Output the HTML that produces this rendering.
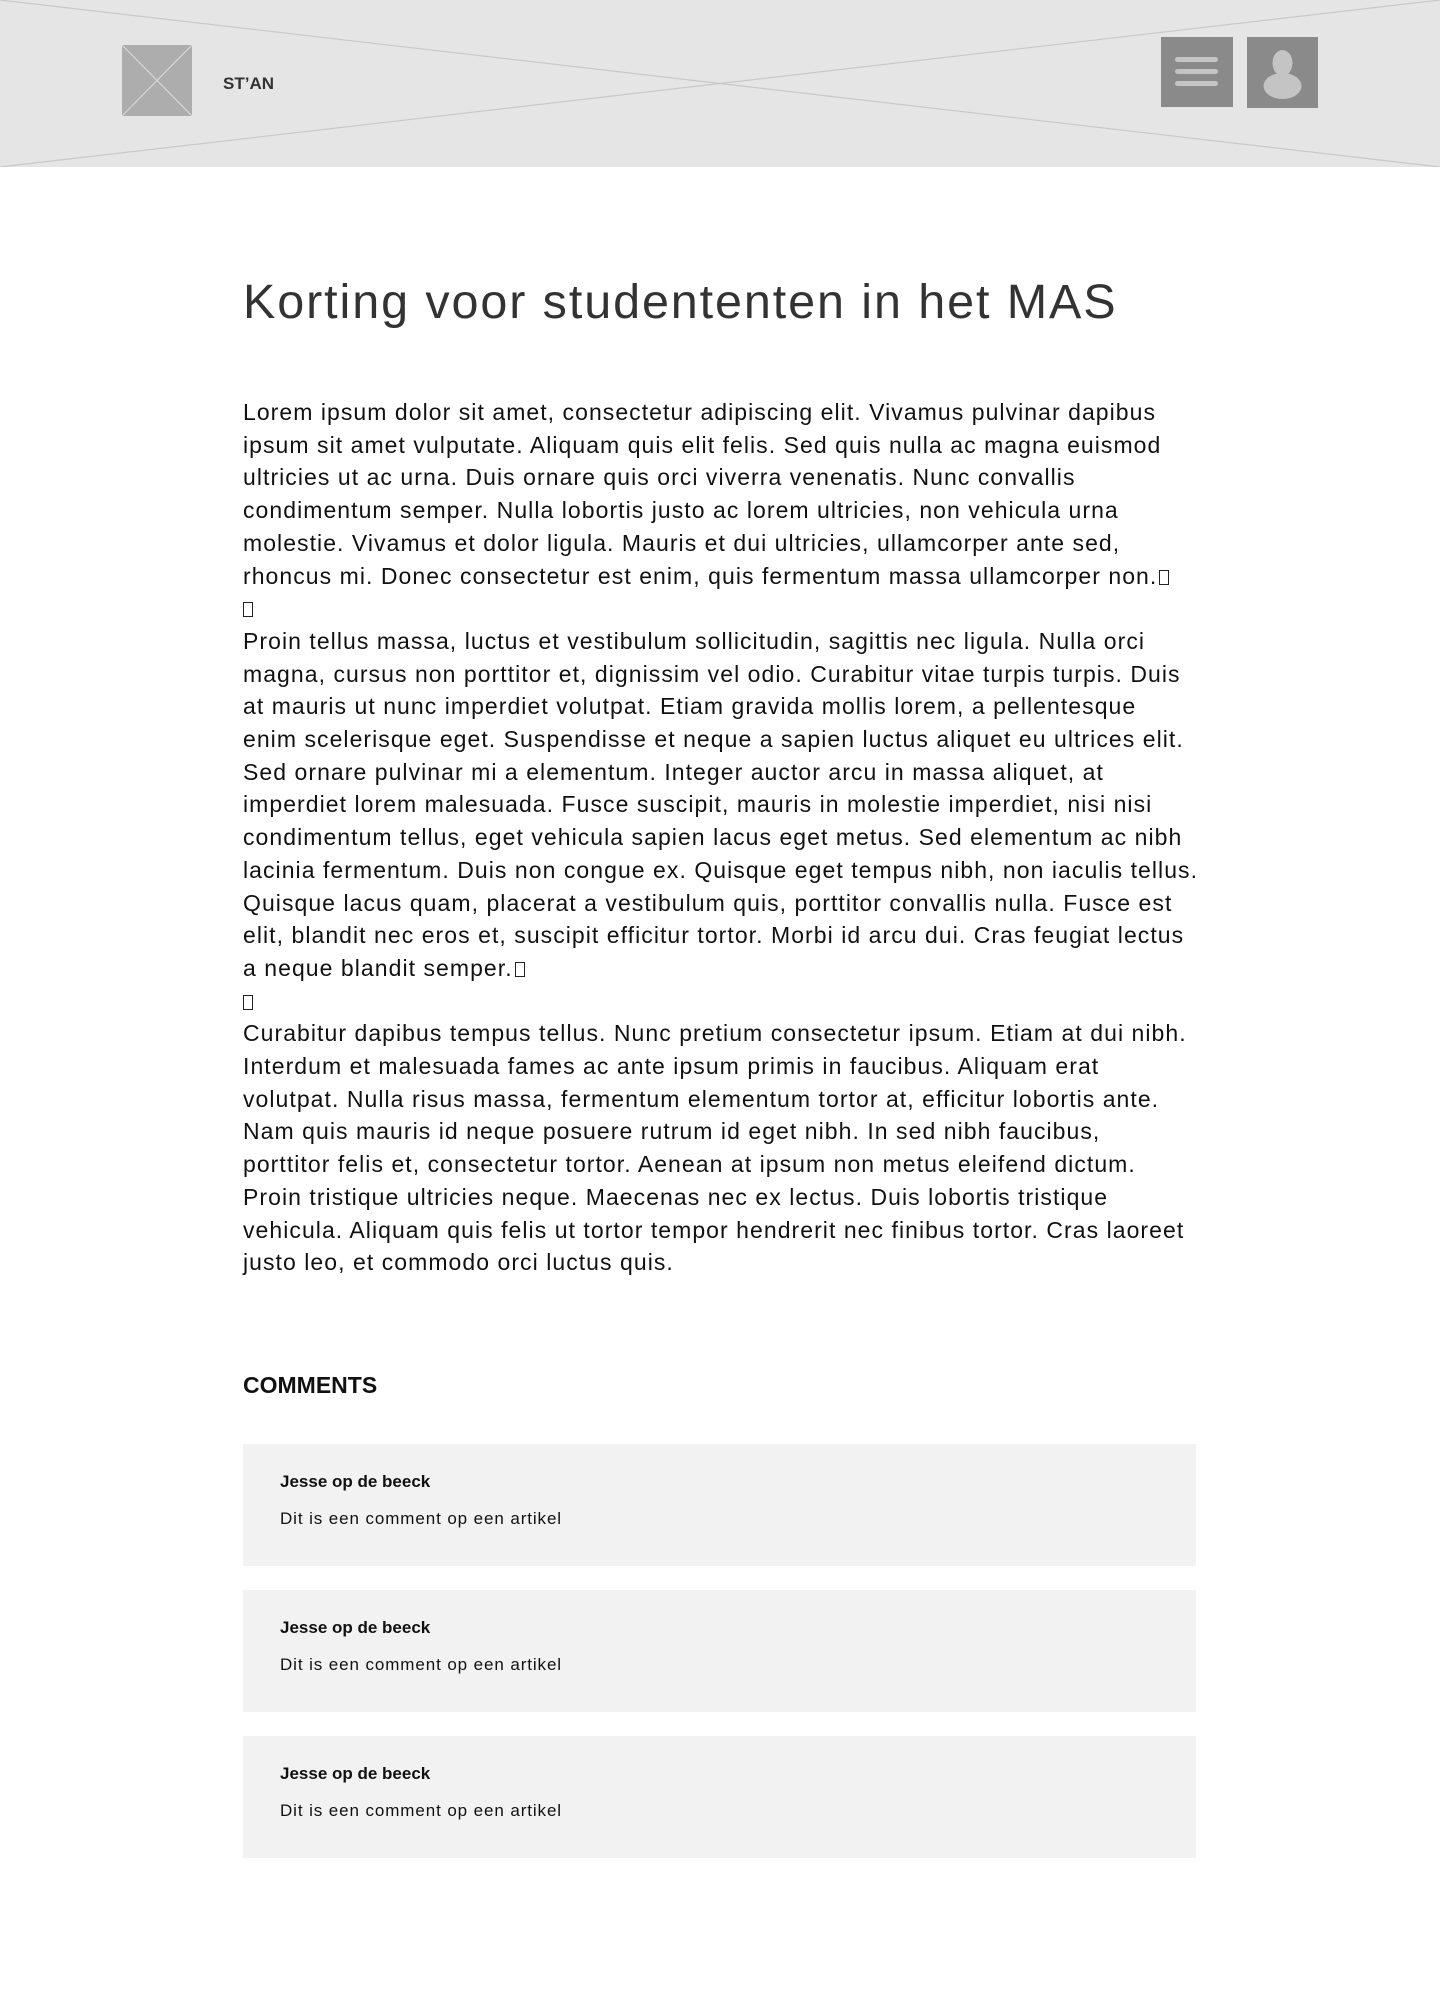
<!DOCTYPE html>
<html><head><meta charset="utf-8"><style>
*{margin:0;padding:0;box-sizing:border-box}
body{width:1440px;height:1994px;background:#fff;font-family:"Liberation Sans",sans-serif;position:relative;overflow:hidden;color:#111}
.hdr{position:absolute;left:0;top:0;width:1440px;height:167px;background:#e5e5e5}
.abs{position:absolute}
.b{display:inline-block;width:10px;height:15px;border:1px solid #222;vertical-align:-1px;margin-left:2px}
.body{position:absolute;left:243px;top:396px;font-size:23px;letter-spacing:1.05px;line-height:32.7px;white-space:nowrap;color:#111}
.c{position:absolute;left:243px;width:953px;height:122px;background:#f2f2f2}
.c .n{position:absolute;left:37px;top:28px;font-size:17px;font-weight:bold;color:#111}
.c .t{position:absolute;left:37px;top:65px;font-size:17px;letter-spacing:0.9px;color:#111}
</style></head><body>
<div class="hdr">
<svg width="1440" height="167" style="position:absolute;left:0;top:0"><line x1="0" y1="0" x2="1440" y2="167" stroke="#c8c8c8" stroke-width="1.2"/><line x1="1440" y1="0" x2="0" y2="167" stroke="#c8c8c8" stroke-width="1.2"/></svg>
<svg class="abs" style="left:122px;top:45px" width="70" height="71"><rect width="70" height="71" fill="#adadad"/><line x1="0" y1="0" x2="70" y2="71" stroke="#ddd"/><line x1="70" y1="0" x2="0" y2="71" stroke="#ddd"/></svg>
<div class="abs" style="left:223px;top:74px;font-size:17px;font-weight:bold;color:#333">ST’AN</div>
<svg class="abs" style="left:1161px;top:37px" width="72" height="70"><rect width="72" height="70" fill="#8a8a8a"/><rect x="14" y="20" width="43" height="5" rx="2.5" fill="#c4c4c4"/><rect x="14" y="32" width="43" height="5" rx="2.5" fill="#c4c4c4"/><rect x="14" y="44" width="43" height="5" rx="2.5" fill="#c4c4c4"/></svg>
<svg class="abs" style="left:1247px;top:37px" width="71" height="71"><rect width="71" height="71" fill="#8a8a8a"/><ellipse cx="35.5" cy="26" rx="10" ry="13" fill="#c4c4c4"/><ellipse cx="35.5" cy="49" rx="19" ry="13" fill="#c4c4c4"/></svg>
</div>
<div class="abs" style="left:243px;top:274px;font-size:48.5px;letter-spacing:1.9px;color:#333;white-space:nowrap">Korting voor studententen in het MAS</div>
<div class="body">Lorem ipsum dolor sit amet, consectetur adipiscing elit. Vivamus pulvinar dapibus<br>ipsum sit amet vulputate. Aliquam quis elit felis. Sed quis nulla ac magna euismod<br>ultricies ut ac urna. Duis ornare quis orci viverra venenatis. Nunc convallis<br>condimentum semper. Nulla lobortis justo ac lorem ultricies, non vehicula urna<br>molestie. Vivamus et dolor ligula. Mauris et dui ultricies, ullamcorper ante sed,<br>rhoncus mi. Donec consectetur est enim, quis fermentum massa ullamcorper non.<span class="b"></span><br><span class="b" style="margin-left:0"></span><br>Proin tellus massa, luctus et vestibulum sollicitudin, sagittis nec ligula. Nulla orci<br>magna, cursus non porttitor et, dignissim vel odio. Curabitur vitae turpis turpis. Duis<br>at mauris ut nunc imperdiet volutpat. Etiam gravida mollis lorem, a pellentesque<br>enim scelerisque eget. Suspendisse et neque a sapien luctus aliquet eu ultrices elit.<br>Sed ornare pulvinar mi a elementum. Integer auctor arcu in massa aliquet, at<br>imperdiet lorem malesuada. Fusce suscipit, mauris in molestie imperdiet, nisi nisi<br>condimentum tellus, eget vehicula sapien lacus eget metus. Sed elementum ac nibh<br>lacinia fermentum. Duis non congue ex. Quisque eget tempus nibh, non iaculis tellus.<br>Quisque lacus quam, placerat a vestibulum quis, porttitor convallis nulla. Fusce est<br>elit, blandit nec eros et, suscipit efficitur tortor. Morbi id arcu dui. Cras feugiat lectus<br>a neque blandit semper.<span class="b"></span><br><span class="b" style="margin-left:0"></span><br>Curabitur dapibus tempus tellus. Nunc pretium consectetur ipsum. Etiam at dui nibh.<br>Interdum et malesuada fames ac ante ipsum primis in faucibus. Aliquam erat<br>volutpat. Nulla risus massa, fermentum elementum tortor at, efficitur lobortis ante.<br>Nam quis mauris id neque posuere rutrum id eget nibh. In sed nibh faucibus,<br>porttitor felis et, consectetur tortor. Aenean at ipsum non metus eleifend dictum.<br>Proin tristique ultricies neque. Maecenas nec ex lectus. Duis lobortis tristique<br>vehicula. Aliquam quis felis ut tortor tempor hendrerit nec finibus tortor. Cras laoreet<br>justo leo, et commodo orci luctus quis.</div>
<div class="abs" style="left:243px;top:1372px;font-size:23px;font-weight:bold;color:#111">COMMENTS</div>
<div class="c" style="top:1444px"><div class="n">Jesse op de beeck</div><div class="t">Dit is een comment op een artikel</div></div>
<div class="c" style="top:1590px"><div class="n">Jesse op de beeck</div><div class="t">Dit is een comment op een artikel</div></div>
<div class="c" style="top:1736px"><div class="n">Jesse op de beeck</div><div class="t">Dit is een comment op een artikel</div></div>
</body></html>
